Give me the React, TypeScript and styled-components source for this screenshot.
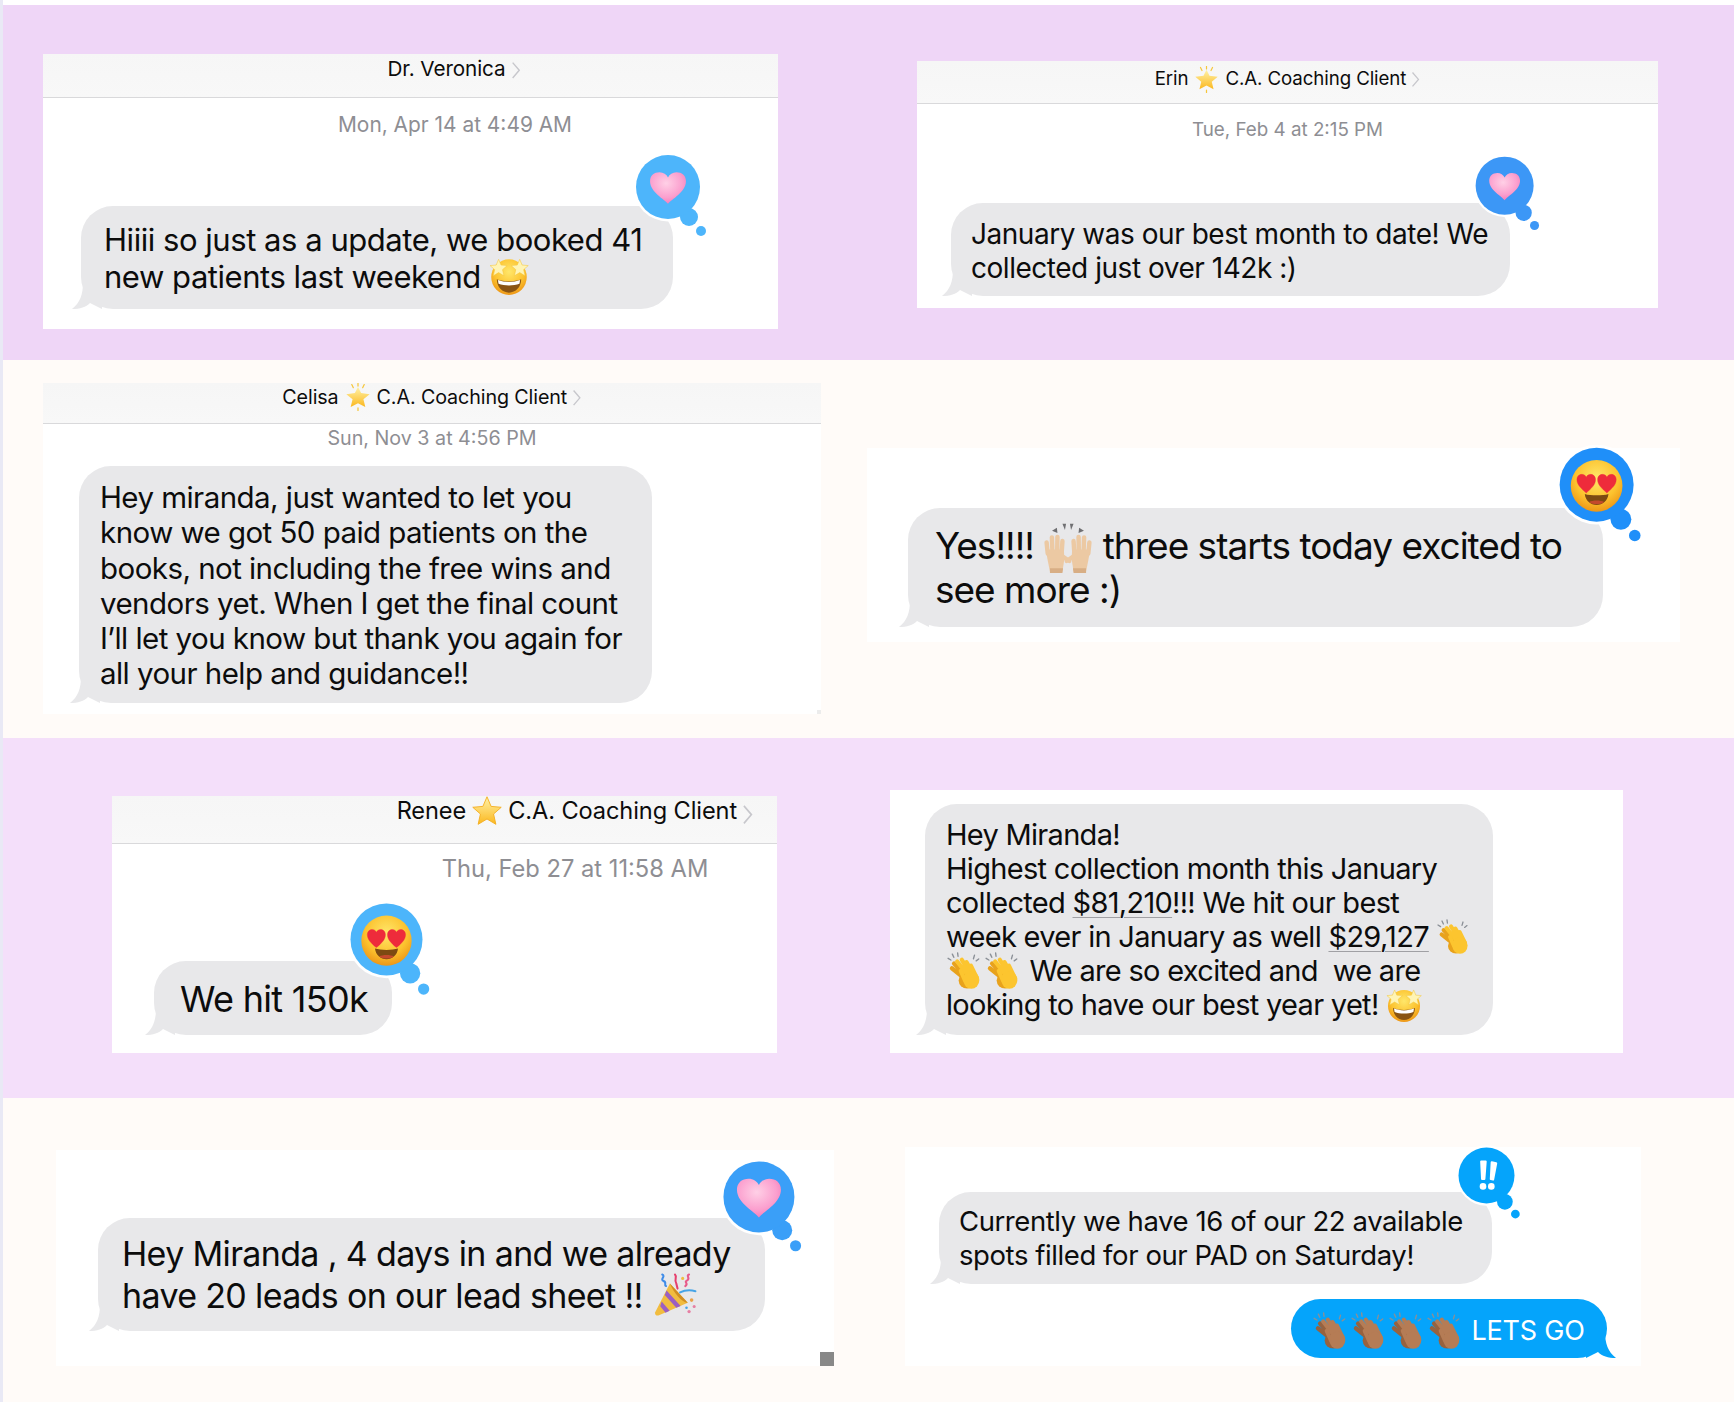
import React from 'react';
import styled, { createGlobalStyle } from 'styled-components';

const GlobalStyle = createGlobalStyle`
  html, body {
    margin: 0;
    padding: 0;
    background: #e9e9f5;
  }
`;

const Page = styled.div`
  width: 1734px;
  height: 1402px;
  overflow: hidden;
  padding-left: 3px;
  box-sizing: border-box;
  background: #e9e9f5;
  font-family: Inter, "Liberation Sans", sans-serif;
  color: #0c0c0c;
`;

const TopGap = styled.div`
  height: 5px;
  background: #ffffff;
`;

const Band = styled.section<{ $height: number; $bg: string }>`
  height: ${(p) => p.$height}px;
  background: ${(p) => p.$bg};
  display: grid;
  grid-template-columns: 864px 867px;
  align-items: start;
`;

const Card = styled.div<{ $x: number; $y: number; $w: number; $h: number }>`
  position: relative;
  display: flex;
  flex-direction: column;
  margin-left: ${(p) => p.$x}px;
  margin-top: ${(p) => p.$y}px;
  width: ${(p) => p.$w}px;
  height: ${(p) => p.$h}px;
  background: #ffffff;
`;

const Header = styled.header<{ $h: number; $top: number; $shift?: number; $fs: number }>`
  height: ${(p) => p.$h}px;
  box-sizing: border-box;
  padding-top: ${(p) => p.$top}px;
  padding-left: ${(p) => p.$shift ?? 0}px;
  display: flex;
  justify-content: center;
  align-items: flex-start;
  gap: 6px;
  font-size: ${(p) => p.$fs}px;
  line-height: 24px;
  letter-spacing: -0.1px;
  white-space: nowrap;
  background: linear-gradient(#f6f6f6, #f8f8f8);
  border-bottom: 1px solid #d9d9db;
`;

const HeaderName = styled.span`
  display: inline-flex;
  align-items: center;
  gap: 5px;
`;

const Chevron = styled.svg`
  width: 0.48em;
  height: 0.9em;
  margin-top: 0.2em;
  margin-left: -1px;
  flex: none;
`;

const Stamp = styled.div<{ $top: number; $shift?: number; $fs: number }>`
  margin-top: ${(p) => p.$top}px;
  padding-left: ${(p) => p.$shift ?? 0}px;
  text-align: center;
  font-size: ${(p) => p.$fs}px;
  line-height: 24px;
  color: #8e8e93;
  white-space: nowrap;
`;

const Bubble = styled.div<{
  $x: number;
  $top: number;
  $w: number;
  $h: number;
  $px: number;
  $py: number;
  $fs: number;
  $lh: number;
  $ls?: number;
  $sent?: boolean;
}>`
  position: relative;
  flex: none;
  box-sizing: border-box;
  margin-left: ${(p) => p.$x}px;
  margin-top: ${(p) => p.$top}px;
  width: ${(p) => p.$w}px;
  height: ${(p) => p.$h}px;
  padding: ${(p) => p.$py}px ${(p) => p.$px}px 0;
  font-size: ${(p) => p.$fs}px;
  line-height: ${(p) => p.$lh}px;
  letter-spacing: ${(p) => p.$ls ?? 0}px;
  white-space: nowrap;
  border-radius: 32px;
  background: ${(p) => (p.$sent ? '#05a4fb' : '#e8e8ea')};
  color: ${(p) => (p.$sent ? '#ffffff' : '#0c0c0c')};
`;

const TailSvg = styled.svg<{ $sent?: boolean }>`
  position: absolute;
  bottom: 0;
  width: 30px;
  height: 26px;
  ${(p) => (p.$sent ? 'right: -9px; transform: scaleX(-1);' : 'left: -9px;')}
`;

const TapbackSvg = styled.svg<{ $x: number; $y: number; $size: number }>`
  position: absolute;
  left: ${(p) => p.$x - p.$size * 0.0625}px;
  top: ${(p) => p.$y - p.$size * 0.0625}px;
  width: ${(p) => p.$size * 1.25}px;
  height: ${(p) => p.$size * 1.4375}px;
`;

// negative block margins keep an emoji from stretching the line it sits in
const EmojiSvg = styled.svg<{ $size: number; $shift?: number }>`
  display: inline-block;
  width: ${(p) => p.$size}px;
  height: ${(p) => p.$size}px;
  margin-block: -14px;
  vertical-align: middle;
  position: relative;
  top: ${(p) => p.$shift ?? -2}px;
`;

const Amount = styled.span`
  text-decoration: underline;
  text-decoration-color: #a0a0a4;
  text-decoration-thickness: 1px;
  text-underline-offset: 4px;
`;

const CornerMark = styled.div<{ $size: number; $color: string }>`
  position: absolute;
  right: 0;
  bottom: 0;
  width: ${(p) => p.$size}px;
  height: ${(p) => p.$size}px;
  background: ${(p) => p.$color};
`;

const Tail = ({ sent }: { sent?: boolean }) => (
  <TailSvg $sent={sent} viewBox="0 0 30 26">
    <path
      d="M11 0 C11 11 8 20 0 26 C8 26 14 24 18 20 L30 26 L30 0 Z"
      fill={sent ? '#05a4fb' : '#e8e8ea'}
    />
  </TailSvg>
);

const Defs = () => (
  <defs>
    <radialGradient id="faceFill" cx="50%" cy="35%" r="70%">
      <stop offset="0%" stopColor="#ffe76a" />
      <stop offset="60%" stopColor="#fcc22e" />
      <stop offset="100%" stopColor="#ea8d12" />
    </radialGradient>
    <radialGradient id="pinkFill" cx="45%" cy="35%" r="75%">
      <stop offset="0%" stopColor="#ffd0e6" />
      <stop offset="60%" stopColor="#fb9fce" />
      <stop offset="100%" stopColor="#f56fb2" />
    </radialGradient>
    <linearGradient id="starFill" x1="0" y1="0" x2="0" y2="1">
      <stop offset="0%" stopColor="#fff2a8" />
      <stop offset="100%" stopColor="#fbb81f" />
    </linearGradient>
  </defs>
);

const HEART = 'M18 33 C10 26 3 20 3 11.5 C3 6 7 3 11 3 C14 3 16.6 4.6 18 7.5 C19.4 4.6 22 3 25 3 C29 3 33 6 33 11.5 C33 20 26 26 18 33 Z';
const WIDE_HEART = 'M18 33 C15 28.6 1 22 1 11.5 C1 6 5 3 10 3 C13.6 3 16.6 5 18 8 C19.4 5 22.4 3 26 3 C31 3 35 6 35 11.5 C35 22 21 28.6 18 33 Z';
const STAR = 'M18 2 L22.6 12.8 L34 13.8 L25.4 21.4 L28 33 L18 27 L8 33 L10.6 21.4 L2 13.8 L13.4 12.8 Z';

const PinkHeart = () => (
  <>
    <Defs />
    <path d={WIDE_HEART} fill="url(#pinkFill)" />
  </>
);

const HeartEyesFace = () => (
  <>
    <Defs />
    <circle cx="18" cy="18" r="17.5" fill="url(#faceFill)" />
    <g fill="#ee2b3b" stroke="#ee2b3b" strokeWidth="0.6">
      <path transform="translate(3.4 9) scale(0.42)" d={HEART} />
      <path transform="translate(17.4 9) scale(0.42)" d={HEART} />
    </g>
    <path d="M10 23.5 C14 24.8 22 24.8 26 23.5 C25.6 28 22 31 18 31 C14 31 10.4 28 10 23.5 Z" fill="#7c4a12" />
    <path d="M13 29 C15 27.6 21 27.6 23 29 C21 31 15 31 13 29 Z" fill="#c4492c" />
  </>
);

const StarStruckFace = () => (
  <>
    <Defs />
    <circle cx="18" cy="19" r="16" fill="url(#faceFill)" />
    <path d="M7 21 C13 23.5 23 23.5 29 21 C29 28 24 33 18 33 C12 33 7 28 7 21 Z" fill="#8a5413" />
    <path d="M8 21.6 C14 24 22 24 28 21.6 L27.4 25 C22 27 14 27 8.6 25 Z" fill="#ffffff" />
    <path transform="translate(0 2) scale(0.48)" d={STAR} fill="#fff4b4" stroke="#f3c63c" strokeWidth="1" />
    <path transform="translate(19 2) scale(0.48)" d={STAR} fill="#fff4b4" stroke="#f3c63c" strokeWidth="1" />
  </>
);

const GlowStar = () => (
  <>
    <Defs />
    <g stroke="#f6c63b" strokeWidth="1.6" strokeLinecap="round">
      <path d="M18 0.5 V4 M10 2 L12 6 M26 2 L24 6 M18 32 V35.5" />
    </g>
    <path d="M18 5 L22 13 L33 14.4 L25 21 L27.4 31 L18 26 L8.6 31 L11 21 L3 14.4 L14 13 Z" fill="url(#starFill)" strokeLinejoin="round" />
  </>
);

const PlainStar = () => (
  <>
    <Defs />
    <path d={STAR} fill="url(#starFill)" stroke="#f4ad1c" strokeWidth="1" strokeLinejoin="round" />
  </>
);

// one open palm, thumb pointing towards the middle of the emoji
const Hand = ({ skin, shade }: { skin: string; shade: string }) => (
  <g>
    <g stroke={skin} strokeWidth="3.2" strokeLinecap="round" fill="none">
      <path d="M3.4 20 L2.6 12 M6.8 19 L6.4 8.4 M10.2 19 L10.4 8 M13.4 20 L14 11" />
      <path d="M14 22 L19 25.4" strokeWidth="3" />
    </g>
    <path d="M2 17 L15 17 L15.4 24 L14 33 L5 33 L3.4 25 Z" fill={skin} />
    <path d="M5 30.6 L14.4 30.6 L14 34 L5 34 Z" fill={shade} />
  </g>
);

const RaisedHands = () => (
  <>
    <path d="M6.5 5.6 L10 3.4 L10.4 7.2 Z M14 0.6 L16.6 0.6 L15.8 5 Z M22 0.6 L19.4 0.6 L20.2 5 Z M29.5 5.6 L26 3.4 L25.6 7.2 Z" fill="#6f6f72" />
    <g transform="translate(0 2)">
      <Hand skin="#ecc9a3" shade="#d8ae85" />
    </g>
    <g transform="translate(36 2) scale(-1 1)">
      <Hand skin="#ecc9a3" shade="#d8ae85" />
    </g>
  </>
);

const Clap = ({ skin, shade }: { skin: string; shade: string }) => (
  <>
    <g stroke="#8a8f96" strokeWidth="1.3" strokeLinecap="round">
      <path d="M6 2 L7.4 5 M11 0.8 L11.4 4 M2 6 L4.6 7.6 M27 3 L26 6.4 M31 6.6 L28.6 8.4" />
    </g>
    <g stroke={shade} strokeWidth="4" strokeLinecap="round" fill="none">
      <path d="M20 27 L5.6 15.4 M21 25 L7.6 11" />
    </g>
    <ellipse cx="20" cy="27" rx="8" ry="7.6" fill={shade} />
    <g stroke={skin} strokeWidth="4" strokeLinecap="round" fill="none">
      <path d="M23 25 L10.6 9 M25 23 L15 7.4 M27 23 L19.4 9.6 M29 24 L23.6 13" />
      <path d="M18 27 L14 18" />
    </g>
    <ellipse cx="24" cy="26.6" rx="7.6" ry="8.2" fill={skin} />
  </>
);

const PartyPopper = () => (
  <>
    <path d="M14 9 L28 24 L5 34 C3.6 34.6 2 33 2.4 31.6 Z" fill="#f1bc3f" />
    <path d="M11.4 14.4 L22.4 26.6 L19 28 L10 18 Z M7.6 23 L13.8 30.4 L10.6 31.8 L6.4 26.8 Z" fill="#9b5fc2" />
    <path d="M14 9 L28 24 C25 25 17 17 14 9 Z" fill="#d08e22" />
    <g fill="none" strokeWidth="1.6" strokeLinecap="round">
      <path d="M8 2 C11 3 6 6 9 7 C12 8 9 10 11 11" stroke="#3f8ce8" />
      <path d="M18 2 C20 4 17 6 19 9 L20 13" stroke="#e63f6d" />
      <path d="M29 2 C26 3 31 5 27 7 C25 8 29 9 26 11" stroke="#e75a8a" />
      <path d="M22 16 C26 14 30 14 34 15" stroke="#46a4e6" />
    </g>
    <g>
      <circle cx="24" cy="5" r="1.2" fill="#f1bc3f" />
      <circle cx="31" cy="22" r="1.4" fill="#e9a34a" />
      <circle cx="33" cy="27" r="1.2" fill="#e67fa3" />
      <circle cx="29" cy="31" r="1.3" fill="#e67fa3" />
      <circle cx="27" cy="28" r="1" fill="#46a4e6" />
    </g>
  </>
);

const Emoji = ({ size, shift, children }: { size: number; shift?: number; children: React.ReactNode }) => (
  <EmojiSvg $size={size} $shift={shift} viewBox="0 0 36 36">
    {children}
  </EmojiSvg>
);

const Tapback = ({
  x,
  y,
  size,
  color,
  children,
}: {
  x: number;
  y: number;
  size: number;
  color: string;
  children: React.ReactNode;
}) => (
  <TapbackSvg $x={x} $y={y} $size={size} viewBox="-4 -4 80 92">
    <circle cx="32" cy="32" r="34.5" fill="#ffffff" />
    <circle cx="53" cy="63" r="11" fill="#ffffff" />
    <circle cx="53" cy="62" r="9" fill={color} />
    <circle cx="32" cy="32" r="32" fill={color} />
    <circle cx="65" cy="76" r="5" fill={color} />
    {children}
  </TapbackSvg>
);

const TapbackIcon = ({ children, size = 36 }: { children: React.ReactNode; size?: number }) => (
  <svg x={32 - size / 2} y={33 - size / 2} width={size} height={size} viewBox="0 0 36 36">
    {children}
  </svg>
);

const Caret = () => (
  <Chevron viewBox="0 0 9 17">
    <path d="M1.5 1.5 L7.5 8.5 L1.5 15.5" fill="none" stroke="#c7c7cc" strokeWidth="1.3" />
  </Chevron>
);

export default function App() {
  return (
    <Page>
      <GlobalStyle />
      <TopGap />
      <Band $height={355} $bg="#efd6f7">
        <Card $x={40} $y={49} $w={735} $h={275}>
          <Header $h={44} $top={3} $shift={87} $fs={20.7}>
            <HeaderName>Dr. Veronica</HeaderName>
            <Caret />
          </Header>
          <Stamp $top={15} $shift={89} $fs={20.9}>Mon, Apr 14 at 4:49 AM</Stamp>
          <Bubble $x={38} $top={69} $w={592} $h={103} $px={23} $py={15} $fs={31} $lh={37} $ls={-0.46}>
            <Tapback x={555} y={-51} size={64} color="#4db5fb">
              <TapbackIcon size={38}><PinkHeart /></TapbackIcon>
            </Tapback>
            Hiiii so just as a update, we booked 41
            <br />
            new patients last weekend{' '}
            <Emoji size={40} shift={-4}><StarStruckFace /></Emoji>
            <Tail />
          </Bubble>
        </Card>
        <Card $x={50} $y={56} $w={741} $h={247}>
          <Header $h={43} $top={6} $fs={18.7}>
            <HeaderName>
              Erin
              <Emoji size={27} shift={0}><GlowStar /></Emoji>
              C.A. Coaching Client
            </HeaderName>
            <Caret />
          </Header>
          <Stamp $top={14} $fs={18.8}>Tue, Feb 4 at 2:15 PM</Stamp>
          <Bubble $x={34} $top={61} $w={559} $h={93} $px={20} $py={14} $fs={28} $lh={34} $ls={-0.47}>
            <Tapback x={525} y={-46} size={58} color="#3c97f6">
              <TapbackIcon size={36}><PinkHeart /></TapbackIcon>
            </Tapback>
            January was our best month to date! We
            <br />
            collected just over 142k :)
            <Tail />
          </Bubble>
        </Card>
      </Band>
      <Band $height={378} $bg="#fffbf8">
        <Card $x={40} $y={23} $w={778} $h={331}>
          <Header $h={41} $top={2} $fs={19.7}>
            <HeaderName>
              Celisa
              <Emoji size={28} shift={0}><GlowStar /></Emoji>
              C.A. Coaching Client
            </HeaderName>
            <Caret />
          </Header>
          <Stamp $top={2} $fs={19.7}>Sun, Nov 3 at 4:56 PM</Stamp>
          <Bubble $x={36} $top={16} $w={573} $h={237} $px={21} $py={14} $fs={29.5} $lh={35.3} $ls={-0.55}>
            Hey miranda, just wanted to let you
            <br />
            know we got 50 paid patients on the
            <br />
            books, not including the free wins and
            <br />
            vendors yet. When I get the final count
            <br />
            I’ll let you know but thank you again for
            <br />
            all your help and guidance!!
            <Tail />
          </Bubble>
          <CornerMark $size={4} $color="#ececec" />
        </Card>
        <Card $x={0} $y={88} $w={813} $h={194}>
          <Bubble $x={41} $top={60} $w={695} $h={119} $px={27} $py={16} $fs={37} $lh={44} $ls={-1}>
            <Tapback x={652} y={-60} size={74} color="#1f8ff9">
              <TapbackIcon size={46}><HeartEyesFace /></TapbackIcon>
            </Tapback>
            Yes!!!! <Emoji size={50} shift={-1}><RaisedHands /></Emoji> three starts today excited to
            <br />
            see more :)
            <Tail />
          </Bubble>
        </Card>
      </Band>
      <Band $height={360} $bg="#f4dffa">
        <Card $x={109} $y={58} $w={665} $h={257}>
          <Header $h={48} $top={3} $shift={261} $fs={23.6}>
            <HeaderName>
              Renee
              <Emoji size={32} shift={0}><PlainStar /></Emoji>
              C.A. Coaching Client
            </HeaderName>
            <Caret />
          </Header>
          <Stamp $top={13} $shift={261} $fs={23.7}>Thu, Feb 27 at 11:58 AM</Stamp>
          <Bubble $x={42} $top={80} $w={238} $h={74} $px={26} $py={18} $fs={36} $lh={40} $ls={-0.7}>
            <Tapback x={196} y={-58} size={72} color="#4cb5fb">
              <TapbackIcon size={46}><HeartEyesFace /></TapbackIcon>
            </Tapback>
            We hit 150k
            <Tail />
          </Bubble>
        </Card>
        <Card $x={23} $y={52} $w={733} $h={263}>
          <Bubble $x={35} $top={14} $w={568} $h={231} $px={21} $py={14} $fs={29} $lh={34} $ls={-0.7}>
            Hey Miranda!
            <br />
            Highest collection month this January
            <br />
            collected <Amount>$81,210</Amount>!!! We hit our best
            <br />
            week ever in January as well <Amount>$29,127</Amount>{' '}
            <Emoji size={36}><Clap skin="#fcc52f" shade="#e8a21c" /></Emoji>
            <br />
            <Emoji size={38}><Clap skin="#fcc52f" shade="#e8a21c" /></Emoji>
            <Emoji size={38}><Clap skin="#fcc52f" shade="#e8a21c" /></Emoji> We are so excited and&nbsp; we are
            <br />
            looking to have our best year yet!{' '}
            <Emoji size={36}><StarStruckFace /></Emoji>
            <Tail />
          </Bubble>
        </Card>
      </Band>
      <Band $height={304} $bg="#fffbf8">
        <Card $x={53} $y={52} $w={778} $h={216}>
          <Bubble $x={42} $top={68} $w={667} $h={113} $px={24} $py={15} $fs={34} $lh={41.5} $ls={-0.65}>
            <Tapback x={625} y={-57} size={71} color="#3a9ff8">
              <TapbackIcon size={42}><PinkHeart /></TapbackIcon>
            </Tapback>
            Hey Miranda , 4 days in and we already
            <br />
            have 20 leads on our lead sheet !!{' '}
            <Emoji size={46} shift={-3}><PartyPopper /></Emoji>
            <Tail />
          </Bubble>
          <CornerMark $size={14} $color="#888888" />
        </Card>
        <Card $x={38} $y={49} $w={736} $h={219}>
          <Bubble $x={34} $top={45} $w={553} $h={92} $px={20} $py={13} $fs={27.5} $lh={33.5} $ls={-0.42}>
            <Tapback x={519} y={-45} size={56} color="#05a4fb">
              <g fill="#ffffff" stroke="#ffffff" strokeWidth="2.5" strokeLinejoin="round">
                <path d="M26 16 L31 16 L29.5 36 L27 36 Z M38 17 L43 18 L39.5 36.5 L37 36 Z" />
              </g>
              <circle cx="28" cy="44.5" r="3.8" fill="#ffffff" />
              <circle cx="37.5" cy="44.5" r="3.8" fill="#ffffff" />
            </Tapback>
            Currently we have 16 of our 22 available
            <br />
            spots filled for our PAD on Saturday!
            <Tail />
          </Bubble>
          <Bubble $sent $x={386} $top={15} $w={316} $h={59} $px={21} $py={2} $fs={27} $lh={59} $ls={-0.2}>
            <Emoji size={38} shift={-2}><Clap skin="#b57c55" shade="#97623f" /></Emoji>
            <Emoji size={38} shift={-2}><Clap skin="#b57c55" shade="#97623f" /></Emoji>
            <Emoji size={38} shift={-2}><Clap skin="#b57c55" shade="#97623f" /></Emoji>
            <Emoji size={38} shift={-2}><Clap skin="#b57c55" shade="#97623f" /></Emoji> LETS GO
            <Tail sent />
          </Bubble>
        </Card>
      </Band>
    </Page>
  );
}
